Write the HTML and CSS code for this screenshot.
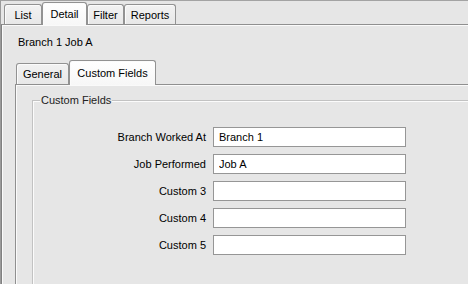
FILE: index.html
```html
<!DOCTYPE html>
<html lang="en">
<head>
    <meta charset="UTF-8">
    <meta name="viewport" content="width=device-width, initial-scale=1.0">
    <title>Detail - Custom Fields</title>
    <link rel="stylesheet" href="styles.css">
</head>
<body>
    <div class="window">
        <div class="tab-strip outer-tabs">
            <div class="tab tab-list">List</div>
            <div class="tab tab-detail active">Detail</div>
            <div class="tab tab-filter">Filter</div>
            <div class="tab tab-reports">Reports</div>
        </div>
        <div class="panel outer-panel">
            <div class="record-title">Branch 1 Job A</div>

            <div class="inner">
                <div class="tab-strip inner-tabs">
                    <div class="tab tab-general">General</div>
                    <div class="tab tab-custom active">Custom Fields</div>
                </div>
                <div class="panel inner-panel">
                    <fieldset class="group">
                        <legend>Custom Fields</legend>
                        <div class="fields">
                            <label for="branch">Branch Worked At</label>
                            <input type="text" id="branch" value="Branch 1">
                            <label for="job">Job Performed</label>
                            <input type="text" id="job" value="Job A">
                            <label for="c3">Custom 3</label>
                            <input type="text" id="c3">
                            <label for="c4">Custom 4</label>
                            <input type="text" id="c4">
                            <label for="c5">Custom 5</label>
                            <input type="text" id="c5">
                        </div>
                    </fieldset>
                </div>
            </div>
        </div>
    </div>
</body>
</html>
```

FILE: styles.css
```css
* {
    box-sizing: border-box;
}

body {
    margin: 0;
    background: #e6e6e6;
    font-family: "Liberation Sans", Arial, sans-serif;
    font-size: 11px;
    color: #000;
    overflow: hidden;
}

.window {
    height: 284px;
    border-top: 1px solid #a3a3a3;
    border-left: 1px solid #9a9a9a;
}

/* tabs */
.tab-strip {
    display: flex;
    align-items: flex-end;
}

.outer-tabs {
    height: 23px;
    padding-left: 3px;
}

.inner-tabs {
    height: 24px;
    padding-left: 1px;
}

.tab {
    display: flex;
    align-items: center;
    justify-content: center;
    border: 1px solid #929292;
    border-bottom: none;
    border-radius: 3px 3px 0 0;
    background: linear-gradient(#f2f2f2, #e8e8e8);
    box-shadow: inset 1px 1px 0 #fbfbfb;
}

.outer-tabs .tab {
    height: 20px;
}

.inner-tabs .tab {
    height: 21px;
}

.tab.active {
    position: relative;
    z-index: 1;
    margin-bottom: -1px;
    background: linear-gradient(#ffffff, #f7f7f7);
}

.outer-tabs .tab.active {
    height: 23px;
}

.inner-tabs .tab.active {
    height: 25px;
}

.tab-list { width: 38px; }
.tab-detail { width: 45px; }
.tab-filter { width: 37px; }
.tab-reports { width: 52px; }
.tab-general { width: 53px; }
.tab-custom { width: 87px; }

/* panels */
.panel {
    border-top: 1px solid #8f8f8f;
    background: #e6e6e6;
}

.outer-panel {
    height: 260px;
    border-left: 1px solid #808080;
    padding: 10px 0 0 13px;
    box-shadow: inset 1px 1px 0 #fafafa;
}

.record-title {
    line-height: 14px;
    padding-left: 3px;
}

.inner {
    margin-top: 11px;
}

.inner-panel {
    height: 200px;
    border-left: 1px solid #8f8f8f;
    padding: 8px 0 0 16px;
    box-shadow: inset 1px 1px 0 #fafafa;
}

/* group box, cut off on the right like the window */
.group {
    margin: 0;
    min-height: 200px;
    padding: 20px 0 0 0;
    border: 1px solid #c2c2c2;
    border-right: none;
    box-shadow: inset 1px 1px 0 #fbfbfb;
}

.group legend {
    margin-left: 7px;
    padding: 0 1px;
    line-height: 14px;
    color: #222;
    background: #e6e6e6;
}

.fields {
    display: grid;
    grid-template-columns: 173px 193px;
    column-gap: 7px;
    row-gap: 7px;
    align-items: center;
}

.fields label {
    text-align: right;
}

.fields input {
    height: 20px;
    margin: 0;
    padding: 0 5px;
    border: 1px solid #969696;
    background: #fff;
    font: inherit;
    color: #000;
    outline: none;
}
```
